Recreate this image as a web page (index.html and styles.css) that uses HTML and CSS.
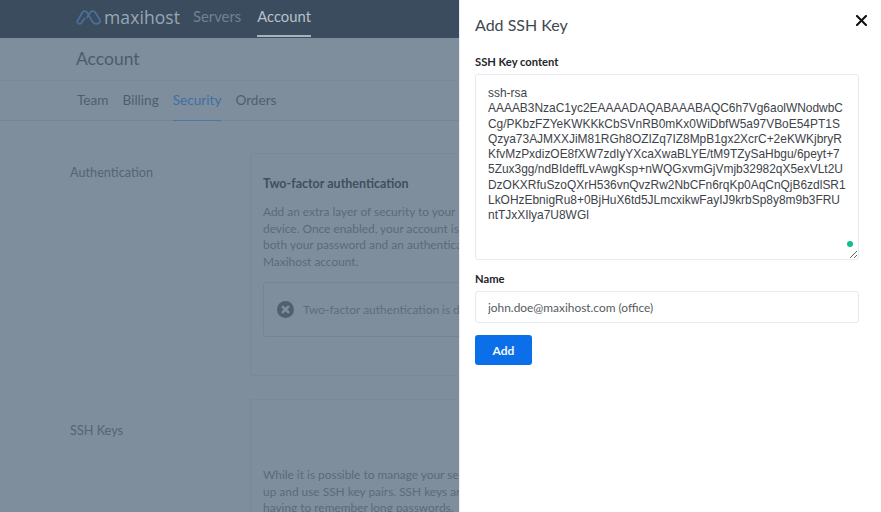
FILE: index.html
```
<!DOCTYPE html>
<html lang="en">
<head>
<meta charset="utf-8">
<title>Add SSH Key</title>
<link rel="stylesheet" href="styles.css">
</head>
<body>
<div class="page">
  <header class="topbar">
    <a class="brand">
      <svg class="logo" width="25" height="16" viewBox="0 0 25 16" fill="none"><path d="M8.5 9.5 5 14.5C3 15.5.5 14 1.5 12L6 4C7.5 1.6 10 1.6 11.5 4L16 12C17.5 15 21 15.5 23 14 24.6 12.6 24.2 11 23.2 9.5L19.3 3.5C18 1.6 15.5 1.6 14.2 3.5L11 8.5" stroke="#4b7098" stroke-width="1.7" stroke-linecap="round" stroke-linejoin="round"/></svg>
      <span class="brand-name">maxihost</span>
    </a>
    <nav class="mainnav">
      <a class="mainlink">Servers</a>
      <a class="mainlink is-current">Account</a>
    </nav>
  </header>
  <div class="titlebar"><h1 class="page-title">Account</h1></div>
  <nav class="tabs">
    <a class="tab">Team</a>
    <a class="tab">Billing</a>
    <a class="tab is-active">Security</a>
    <a class="tab">Orders</a>
  </nav>
  <main class="sections">
    <section class="section">
      <h2 class="section-label">Authentication</h2>
      <div class="card card-auth">
        <h3 class="card-title">Two-factor authentication</h3>
        <p class="card-text">Add an extra layer of security to your Maxihost account using a mobile<br>device. Once enabled, your account is protected by requiring<br>both your password and an authentication code to sign in to your<br>Maxihost account.</p>
        <div class="status">
          <svg class="status-icon" width="17" height="17" viewBox="0 0 17 17"><circle cx="8.5" cy="8.5" r="8.5" fill="#515f6e"/><path d="M5.8 5.8 11.2 11.2M11.2 5.8 5.8 11.2" stroke="#7f8e9d" stroke-width="2.6" stroke-linecap="round"/></svg>
          <span>Two-factor authentication is disabled.</span>
        </div>
      </div>
    </section>
    <section class="section">
      <h2 class="section-label label-ssh">SSH Keys</h2>
      <div class="card card-ssh">
        <p class="card-text">While it is possible to manage your servers with a password, we recommend you set<br>up and use SSH key pairs. SSH keys are more secure and save you from<br>having to remember long passwords.</p>
      </div>
    </section>
  </main>
</div>
<aside class="panel">
  <div class="panel-head">
    <h2 class="panel-title">Add SSH Key</h2>
    <button class="close" type="button" aria-label="Close"><svg width="11" height="11" viewBox="0 0 11 11"><path d="M1 1 10 10M10 1 1 10" stroke="#111" stroke-width="2.1" stroke-linecap="round"/></svg></button>
  </div>
  <form class="form">
    <label class="label" for="key">SSH Key content</label>
    <div class="key-wrap">
      <textarea class="input key" id="key" spellcheck="false">ssh-rsa
AAAAB3NzaC1yc2EAAAADAQABAAABAQC6h7Vg6aolWNodwbC
Cg/PKbzFZYeKWKKkCbSVnRB0mKx0WiDbfW5a97VBoE54PT1S
Qzya73AJMXXJiM81RGh8OZIZq7IZ8MpB1gx2XcrC+2eKWKjbryR
KfvMzPxdizOE8fXW7zdIyYXcaXwaBLYE/tM9TZySaHbgu/6peyt+7
5Zux3gg/ndBIdeffLvAwgKsp+nWQGxvmGjVmjb32982qX5exVLt2U
DzOKXRfuSzoQXrH536vnQvzRw2NbCFn6rqKp0AqCnQjB6zdlSR1
LkOHzEbnigRu8+0BjHuX6td5JLmcxikwFayIJ9krbSp8y8m9b3FRU
ntTJxXIlya7U8WGl</textarea>
      <span class="dot"></span>
    </div>
    <label class="label label-name" for="name">Name</label>
    <input class="input name" id="name" type="text" value="john.doe@maxihost.com (office)">
    <button class="add" type="button">Add</button>
  </form>
</aside>
</body>
</html>
```

FILE: styles.css
```
* { box-sizing: border-box; }
html, body { margin: 0; height: 100%; overflow: hidden; }
body { font-family: Lato, "Open Sans", sans-serif; background: #7f8e9d; color: #485766; }
h1, h2, h3, p { margin: 0; font-weight: 400; }

.page { height: 512px; overflow: hidden; }

.topbar { height: 38px; background: #3b4c5e; padding-left: 76px; display: flex; align-items: stretch; }
.brand { display: flex; align-items: center; gap: 3px; width: 117px; padding-bottom: 4px; }
.logo { flex: none; }
.brand-name { font-family: "Open Sans", sans-serif; font-size: 17.5px; font-weight: 400; color: #9aa6b3; letter-spacing: .1px; line-height: 20px; }
.mainnav { display: flex; gap: 16px; }
.mainlink { font-size: 14.8px; line-height: 32px; color: #728191; height: 38px; }
.mainlink.is-current { color: #b8c0c9; border-bottom: 2px solid #aab4be; height: 37px; }

.titlebar { height: 43px; padding-left: 76px; border-bottom: 1px solid #7a8998; }
.page-title { font-size: 17.5px; line-height: 41px; color: #4d5c6b; }

.tabs { height: 40px; padding-left: 77px; display: flex; gap: 14px; border-bottom: 1px solid #778695; }
.tab { font-size: 13.6px; line-height: 39px; color: #4f5e6e; height: 40px; }
.tab.is-active { color: #3e6ea3; border-bottom: 1px solid #4478ae; }

.sections { padding: 32px 0 0 70px; }
.section { display: flex; }
.section + .section { margin-top: 23px; }
.section-label { width: 180px; flex: none; font-size: 12.7px; line-height: 16px; padding-top: 11px; color: #556474; }
.label-ssh { padding-top: 23px; }
.card { width: 560px; flex: none; border: 1px solid #7a8998; border-radius: 2px; padding: 0 12px; }
.card-auth { height: 223px; padding-top: 22px; }
.card-ssh { height: 140px; padding-top: 67px; }
.card-title { font-size: 12.5px; line-height: 16px; font-weight: 700; color: #414f5e; margin-bottom: 12px; }
.card-text { font-size: 11.9px; line-height: 16.6px; color: #5b6a79; white-space: nowrap; }
.status { margin-top: 12px; height: 55px; border: 1px solid #768594; border-radius: 3px; padding-left: 13px; display: flex; align-items: center; gap: 9px; font-size: 11.9px; color: #5e6d7c; white-space: nowrap; }
.status-icon { flex: none; }

.panel { position: fixed; top: 0; right: 0; bottom: 0; width: 422px; background: #fff; border-left: 1px solid #e8edf2; padding: 0 22px 0 15px; }
.panel-head { height: 54px; display: flex; justify-content: space-between; align-items: flex-start; }
.panel-title { font-size: 16px; line-height: 20px; padding-top: 15px; color: #3f4750; }
.close { border: 0; background: none; padding: 0; margin: 15px -8px 0 0; width: 11px; height: 11px; line-height: 0; }

.form { display: flex; flex-direction: column; align-items: flex-start; }
.label { font-size: 11.2px; font-weight: 700; line-height: 16px; color: #1f2529; margin-bottom: 4px; }
.label-name { margin-top: 11px; }
.input { width: 384px; display: block; border: 1px solid #e6e9ed; border-radius: 3px; background: #fff; outline: none; margin: 0; }
.key-wrap { position: relative; height: 186px; width: 384px; }
.key { height: 186px; padding: 11px 12px; font-family: "Liberation Sans", Arial, sans-serif; font-size: 11.94px; line-height: 15.25px; color: #3d4349; resize: vertical; white-space: pre; overflow: hidden; }
.dot { position: absolute; right: 6px; bottom: 13px; width: 6px; height: 6px; border-radius: 50%; background: #0cc08f; }
.name { height: 32px; padding: 0 12px; font-family: Lato, "Open Sans", sans-serif; font-size: 11.9px; color: #555b62; }
.add { margin-top: 12px; width: 57px; height: 30px; border: 0; border-radius: 3px; background: #0a6fe8; color: #f2f7fd; font-family: Lato, "Open Sans", sans-serif; font-size: 12px; font-weight: 700; padding: 0; }
```
